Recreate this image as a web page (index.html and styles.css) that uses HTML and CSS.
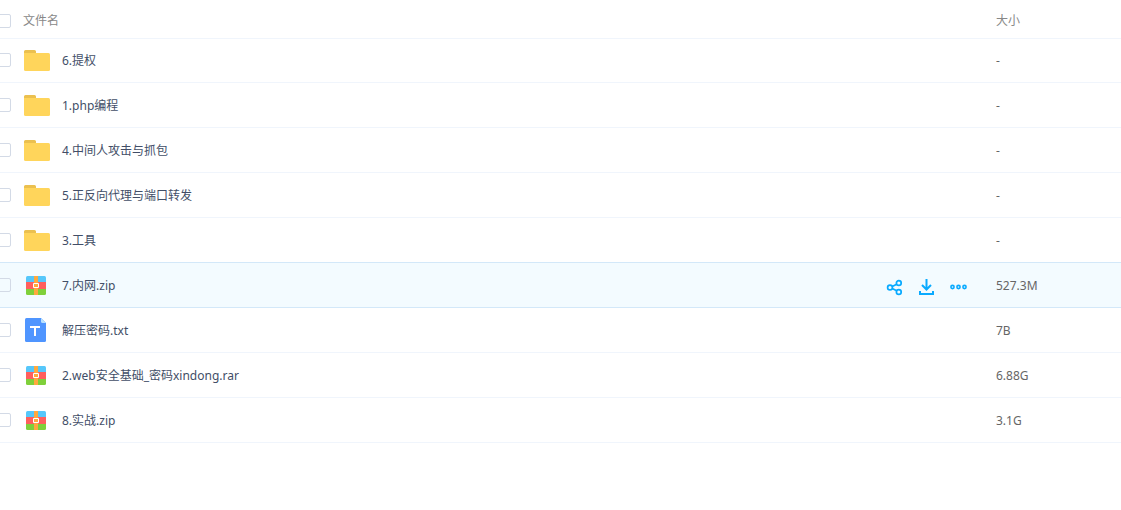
FILE: index.html
```
<!DOCTYPE html>
<html lang="zh-CN">
<head>
<meta charset="utf-8">
<title>文件列表</title>
<link rel="stylesheet" href="styles.css">
</head>
<body>
<svg class="sprite" aria-hidden="true">
  <symbol id="folder" viewBox="0 0 28 28">
    <path fill="#ebc04f" d="M1 10V5.500Q1 4 2.500 4H11.500Q13 4 13 5.500V7H16V10Z"/>
    <path fill="#ffd55b" d="M1 7H25.500Q27 7 27 8.500V23.500Q27 25 25.500 25H2.500Q1 25 1 23.500Z"/>
  </symbol>
  <symbol id="archive" viewBox="0 0 28 28">
    <path fill="#56c7fa" d="M3 11V6.500Q3 5 4.500 5H21.500Q23 5 23 6.500V11Z"/>
    <path fill="#ff5f5d" d="M3 11H23V18H3Z"/>
    <path fill="#7fd03b" d="M3 18H23V22.500Q23 24 21.500 24H4.500Q3 24 3 22.500Z"/>
    <path fill="#ffa93e" d="M11 5H15V24H11Z"/>
    <path fill="#ffa93e" stroke="#fff" d="M10.500 12.500H15.500V16.500H10.500Z"/>
  </symbol>
  <symbol id="text" viewBox="0 0 28 28">
    <path fill="#4f95ff" d="M3.500 2H18L23 7V24.500Q23 26 21.500 26H3.500Q2 26 2 24.500V3.500Q2 2 3.500 2Z"/>
    <path fill="#b9e2ff" d="M18 2L23 7H19.500Q18 7 18 5.500Z"/>
    <path fill="none" stroke="#fff" stroke-width="2" d="M7 11H17M12 11V20"/>
  </symbol>
</svg>
<table class="files">
  <thead>
    <tr>
      <th class="check"><input type="checkbox" aria-label="全选"></th>
      <th class="name">文件名</th>
      <th class="actions"></th>
      <th class="size">大小</th>
    </tr>
  </thead>
  <tbody>
    <tr>
      <td class="check"><input type="checkbox" aria-label="6.提权"></td>
      <td class="name"><a class="file" href="#"><svg class="icon"><use href="#folder"/></svg><span>6.提权</span></a></td>
      <td class="actions"></td>
      <td class="size">-</td>
    </tr>
    <tr>
      <td class="check"><input type="checkbox" aria-label="1.php编程"></td>
      <td class="name"><a class="file" href="#"><svg class="icon"><use href="#folder"/></svg><span>1.php编程</span></a></td>
      <td class="actions"></td>
      <td class="size">-</td>
    </tr>
    <tr>
      <td class="check"><input type="checkbox" aria-label="4.中间人攻击与抓包"></td>
      <td class="name"><a class="file" href="#"><svg class="icon"><use href="#folder"/></svg><span>4.中间人攻击与抓包</span></a></td>
      <td class="actions"></td>
      <td class="size">-</td>
    </tr>
    <tr>
      <td class="check"><input type="checkbox" aria-label="5.正反向代理与端口转发"></td>
      <td class="name"><a class="file" href="#"><svg class="icon"><use href="#folder"/></svg><span>5.正反向代理与端口转发</span></a></td>
      <td class="actions"></td>
      <td class="size">-</td>
    </tr>
    <tr class="above-active">
      <td class="check"><input type="checkbox" aria-label="3.工具"></td>
      <td class="name"><a class="file" href="#"><svg class="icon"><use href="#folder"/></svg><span>3.工具</span></a></td>
      <td class="actions"></td>
      <td class="size">-</td>
    </tr>
    <tr class="active">
      <td class="check"><input type="checkbox" aria-label="7.内网.zip"></td>
      <td class="name"><a class="file" href="#"><svg class="icon"><use href="#archive"/></svg><span>7.内网.zip</span></a></td>
      <td class="actions">
        <div class="tools">
          <button type="button" aria-label="分享">
            <svg viewBox="0 0 18 18" fill="none" stroke="#09aaff" stroke-width="1.700">
              <circle cx="4" cy="9.500" r="2.400"/><circle cx="12.800" cy="5" r="2.400"/><circle cx="12.800" cy="14" r="2.400"/>
              <path d="M6.200 8.500L10.700 6.200M6.200 10.500L10.700 12.800"/>
            </svg>
          </button>
          <button type="button" aria-label="下载">
            <svg viewBox="0 0 18 18" fill="none" stroke="#09aaff" stroke-width="2">
              <path d="M8.500 1V11M4 7L8.500 11.500L13 7M2 13V16H15V13"/>
            </svg>
          </button>
          <button type="button" aria-label="更多">
            <svg viewBox="0 0 18 18" fill="none" stroke="#09aaff" stroke-width="1.600">
              <circle cx="2.500" cy="9" r="1.600"/><circle cx="8.500" cy="9" r="1.600"/><circle cx="14.500" cy="9" r="1.600"/>
            </svg>
          </button>
        </div>
      </td>
      <td class="size">527.3M</td>
    </tr>
    <tr>
      <td class="check"><input type="checkbox" aria-label="解压密码.txt"></td>
      <td class="name"><a class="file" href="#"><svg class="icon"><use href="#text"/></svg><span>解压密码.txt</span></a></td>
      <td class="actions"></td>
      <td class="size">7B</td>
    </tr>
    <tr>
      <td class="check"><input type="checkbox" aria-label="2.web安全基础_密码xindong.rar"></td>
      <td class="name"><a class="file" href="#"><svg class="icon"><use href="#archive"/></svg><span>2.web安全基础_密码xindong.rar</span></a></td>
      <td class="actions"></td>
      <td class="size">6.88G</td>
    </tr>
    <tr>
      <td class="check"><input type="checkbox" aria-label="8.实战.zip"></td>
      <td class="name"><a class="file" href="#"><svg class="icon"><use href="#archive"/></svg><span>8.实战.zip</span></a></td>
      <td class="actions"></td>
      <td class="size">3.1G</td>
    </tr>
  </tbody>
</table>
</body>
</html>
```
FILE: styles.css
```
* {
  box-sizing: border-box;
}

body {
  margin: 0;
  background: #fff;
  color: #424e67;
  font: 12px/18px "Noto Sans", "Noto Sans CJK SC", sans-serif;
  overflow-x: hidden;
}

.sprite {
  display: none;
}

.files {
  width: 100%;
  border-collapse: separate;
  border-spacing: 0;
  table-layout: fixed;
}

th,
td {
  height: 45px;
  padding: 0;
  border-bottom: 1px solid #f0f5fc;
  text-align: left;
  font-weight: 400;
  vertical-align: middle;
}

th {
  height: 39px;
  padding-top: 4px;
  color: #888;
}

tbody tr:first-child td {
  height: 44px;
  padding-bottom: 1px;
}

.check {
  width: 23px;
}

.actions {
  width: 110px;
}

.size {
  width: 125px;
}

td.size {
  padding-top: 2px;
  color: #666;
}

.check input {
  display: block;
  appearance: none;
  width: 14px;
  height: 14px;
  margin: 0 0 0 -3px;
  border: 1px solid #d3dae6;
  border-radius: 2px;
  background: #fff;
}

.file {
  display: flex;
  align-items: center;
  gap: 11px;
  color: inherit;
  text-decoration: none;
}

.file span {
  padding-top: 2px;
}

.icon {
  flex: none;
  width: 28px;
  height: 28px;
}

.above-active td,
.active td {
  border-bottom-color: #d3e8f9;
}

.active td {
  background: #f3fbff;
}

.active .check input {
  background: transparent;
}

.tools {
  display: flex;
  gap: 14px;
  padding-top: 4px;
}

.tools button {
  width: 18px;
  height: 18px;
  padding: 0;
  border: 0;
  background: none;
}

.tools svg {
  display: block;
  width: 18px;
  height: 18px;
}
```
